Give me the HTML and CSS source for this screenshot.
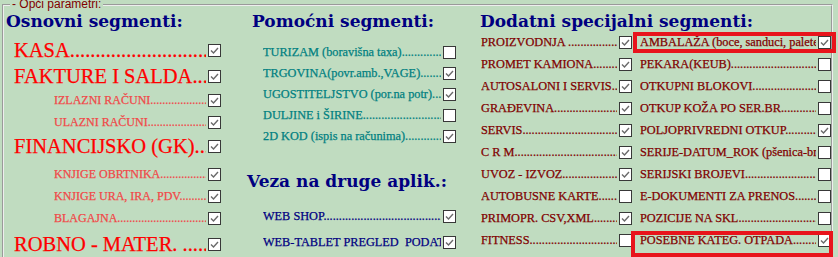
FILE: index.html
```html
<!DOCTYPE html>
<html lang="hr">
<head>
    <meta charset="UTF-8">
    <title>Opći parametri</title>
    <link rel="stylesheet" href="styles.css">
</head>
<body>
    <fieldset class="params">
        <legend>- Opći parametri:</legend>

        <div class="panels">
            <!-- Osnovni segmenti -->
            <div class="basic">
                <h2>Osnovni segmenti:</h2>
                <div class="row big first"><span class="label">KASA..............................................</span><span class="cb on"><svg viewBox="0 0 11 11"><path d="M2 5.5 L4.5 8 L9 3"/></svg></span></div>
                <div class="row big"><span class="label">FAKTURE I SALDA..................</span><span class="cb on"><svg viewBox="0 0 11 11"><path d="M2 5.5 L4.5 8 L9 3"/></svg></span></div>
                <div class="row sub"><span class="label">IZLAZNI RAČUNI....................................</span><span class="cb on"><svg viewBox="0 0 11 11"><path d="M2 5.5 L4.5 8 L9 3"/></svg></span></div>
                <div class="row sub"><span class="label">ULAZNI RAČUNI......................................</span><span class="cb on"><svg viewBox="0 0 11 11"><path d="M2 5.5 L4.5 8 L9 3"/></svg></span></div>
                <div class="row big"><span class="label">FINANCIJSKO (GK).................</span><span class="cb on"><svg viewBox="0 0 11 11"><path d="M2 5.5 L4.5 8 L9 3"/></svg></span></div>
                <div class="group">
                    <div class="row sub"><span class="label">KNJIGE OBRTNIKA....................................</span><span class="cb on"><svg viewBox="0 0 11 11"><path d="M2 5.5 L4.5 8 L9 3"/></svg></span></div>
                    <div class="row sub"><span class="label">KNJIGE URA, IRA, PDV...............................</span><span class="cb on"><svg viewBox="0 0 11 11"><path d="M2 5.5 L4.5 8 L9 3"/></svg></span></div>
                    <div class="row sub"><span class="label">BLAGAJNA..................................................</span><span class="cb on"><svg viewBox="0 0 11 11"><path d="M2 5.5 L4.5 8 L9 3"/></svg></span></div>
                </div>
                <div class="row big last"><span class="label">ROBNO - MATER. .............</span><span class="cb on"><svg viewBox="0 0 11 11"><path d="M2 5.5 L4.5 8 L9 3"/></svg></span></div>
            </div>

            <!-- Pomoćni segmenti + veze -->
            <div class="helper">
                <h2>Pomoćni segmenti:</h2>
                <div class="row first"><span class="label">TURIZAM (boravišna taxa)..................................</span><span class="cb"></span></div>
                <div class="row"><span class="label">TRGOVINA(povr.amb.,VAGE).................................</span><span class="cb on"><svg viewBox="0 0 11 11"><path d="M2 5.5 L4.5 8 L9 3"/></svg></span></div>
                <div class="row"><span class="label">UGOSTITELJSTVO (por.na potr)..........................</span><span class="cb on"><svg viewBox="0 0 11 11"><path d="M2 5.5 L4.5 8 L9 3"/></svg></span></div>
                <div class="row"><span class="label">DULJINE i ŠIRINE.................................................</span><span class="cb"></span></div>
                <div class="row"><span class="label">2D KOD (ispis na računima).............................</span><span class="cb on"><svg viewBox="0 0 11 11"><path d="M2 5.5 L4.5 8 L9 3"/></svg></span></div>

                <h2 class="links-title">Veza na druge aplik.:</h2>
                <div class="row link first-link"><span class="label">WEB SHOP...................................................................</span><span class="cb on"><svg viewBox="0 0 11 11"><path d="M2 5.5 L4.5 8 L9 3"/></svg></span></div>
                <div class="row link second-link"><span class="label">WEB-TABLET PREGLED&nbsp; PODAT</span><span class="cb on"><svg viewBox="0 0 11 11"><path d="M2 5.5 L4.5 8 L9 3"/></svg></span></div>
            </div>

            <!-- Dodatni specijalni segmenti -->
            <div class="extra">
                <h2>Dodatni specijalni segmenti:</h2>
                <div class="extra-cols">
                    <div class="col">
                        <div class="row"><span class="label">PROIZVODNJA ..........................................</span><span class="cb on"><svg viewBox="0 0 11 11"><path d="M2 5.5 L4.5 8 L9 3"/></svg></span></div>
                        <div class="row"><span class="label">PROMET KAMIONA..................................</span><span class="cb on"><svg viewBox="0 0 11 11"><path d="M2 5.5 L4.5 8 L9 3"/></svg></span></div>
                        <div class="row"><span class="label">AUTOSALONI I SERVIS.........................</span><span class="cb on"><svg viewBox="0 0 11 11"><path d="M2 5.5 L4.5 8 L9 3"/></svg></span></div>
                        <div class="row"><span class="label">GRAĐEVINA...............................................</span><span class="cb on"><svg viewBox="0 0 11 11"><path d="M2 5.5 L4.5 8 L9 3"/></svg></span></div>
                        <div class="row"><span class="label">SERVIS.........................................................</span><span class="cb on"><svg viewBox="0 0 11 11"><path d="M2 5.5 L4.5 8 L9 3"/></svg></span></div>
                        <div class="row"><span class="label">C R M..........................................................</span><span class="cb on"><svg viewBox="0 0 11 11"><path d="M2 5.5 L4.5 8 L9 3"/></svg></span></div>
                        <div class="row"><span class="label">UVOZ - IZVOZ.............................................</span><span class="cb on"><svg viewBox="0 0 11 11"><path d="M2 5.5 L4.5 8 L9 3"/></svg></span></div>
                        <div class="row"><span class="label">AUTOBUSNE KARTE..............................</span><span class="cb"></span></div>
                        <div class="row"><span class="label">PRIMOPR. CSV,XML.................................</span><span class="cb on"><svg viewBox="0 0 11 11"><path d="M2 5.5 L4.5 8 L9 3"/></svg></span></div>
                        <div class="row"><span class="label">FITNESS......................................................</span><span class="cb"></span></div>
                    </div>
                    <div class="col">
                        <div class="row hl hl-top"><span class="label">AMBALAŽA (boce, sanduci, palete)</span><span class="cb on"><svg viewBox="0 0 11 11"><path d="M2 5.5 L4.5 8 L9 3"/></svg></span></div>
                        <div class="row"><span class="label">PEKARA(KEUB)..................................................</span><span class="cb"></span></div>
                        <div class="row"><span class="label">OTKUPNI BLOKOVI..........................................</span><span class="cb"></span></div>
                        <div class="row"><span class="label">OTKUP KOŽA PO SER.BR.................................</span><span class="cb"></span></div>
                        <div class="row"><span class="label">POLJOPRIVREDNI OTKUP...............................</span><span class="cb on"><svg viewBox="0 0 11 11"><path d="M2 5.5 L4.5 8 L9 3"/></svg></span></div>
                        <div class="row"><span class="label">SERIJE-DATUM_ROK (pšenica-brašno)</span><span class="cb"></span></div>
                        <div class="row"><span class="label">SERIJSKI BROJEVI..........................................</span><span class="cb"></span></div>
                        <div class="row"><span class="label">E-DOKUMENTI ZA PRENOS..............................</span><span class="cb"></span></div>
                        <div class="row"><span class="label">POZICIJE NA SKL..............................................</span><span class="cb"></span></div>
                        <div class="row hl hl-bottom"><span class="label">POSEBNE KATEG. OTPADA..............................</span><span class="cb on"><svg viewBox="0 0 11 11"><path d="M2 5.5 L4.5 8 L9 3"/></svg></span></div>
                    </div>
                </div>
            </div>
        </div>
    </fieldset>
</body>
</html>
```

FILE: styles.css
```css
:root {
    --bg: #c0dcc0;
    --navy: #000080;
    --maroon: #800000;
    --teal: #008080;
    --mark: #e8141c;
}

* {
    box-sizing: border-box;
}

html, body {
    margin: 0;
    padding: 0;
    overflow: hidden;
}

body {
    width: 838px;
    height: 257px;
    background-color: var(--bg);
    font-family: "Liberation Serif", "Times New Roman", serif;
}

.params {
    min-width: 0;
    margin: -2px 5px 0 2px;
    padding: 0 0 8px;
    border: 2px groove #eeeeee;
}

.params legend {
    margin-left: 6px;
    padding: 0 2px 2px;
    font: 12px/12px "Liberation Sans", Arial, sans-serif;
    color: var(--maroon);
}

.panels {
    display: grid;
    grid-template-columns: 218px 248px 1fr;
}

h2 {
    margin: 0;
    font: bold 17px/19px "DejaVu Serif", serif;
    color: var(--navy);
    white-space: nowrap;
}

.row {
    display: flex;
    align-items: center;
    height: 22px;
    font-size: 12.3px;
}

.label {
    flex: 1;
    min-width: 0;
    overflow: hidden;
    white-space: nowrap;
    -webkit-text-stroke: 0.25px currentColor;
}

/* checkbox */
.cb {
    flex: none;
    width: 13px;
    height: 13px;
    margin-left: 2px;
    border: 1px solid #383838;
    background-color: #fff;
}

.cb svg {
    display: block;
    width: 11px;
    height: 11px;
}

.cb path {
    fill: none;
    stroke: #6a6a6a;
    stroke-width: 1.4;
}

/* Osnovni segmenti */
.basic {
    padding-right: 1px;
}

.basic h2 {
    padding-left: 2px;
}

.basic .big {
    height: 26px;
    padding-left: 10px;
    font-size: 20.5px;
    color: #ff0000;
}

.basic .sub {
    padding-left: 50px;
    font-size: 12px;
    color: #f04848;
}

.basic .first {
    margin-top: 6px;
}

.basic .group {
    padding-top: 4px;
}

.basic .last {
    margin-top: 2px;
}

/* Pomoćni segmenti */
.helper {
    padding-right: 14px;
}

.helper h2 {
    padding-left: 30px;
}

.helper .row {
    height: 21px;
    padding-left: 41px;
    color: var(--teal);
}

.helper .first {
    margin-top: 11px;
}

.helper .links-title {
    margin-top: 25px;
    padding-left: 25px;
}

.helper .link {
    color: var(--navy);
}

.helper .first-link {
    margin-top: 15px;
}

.helper .second-link {
    margin-top: 5px;
}

/* Dodatni specijalni segmenti */
.extra h2 {
    padding-left: 10px;
}

.extra-cols {
    display: grid;
    grid-template-columns: 151px 191px;
    gap: 8px;
    padding-left: 11px;
}

.extra .row {
    color: var(--maroon);
}

.hl {
    position: relative;
}

.hl::after {
    content: "";
    position: absolute;
    border: 4px solid var(--mark);
    pointer-events: none;
}

.hl-top::after {
    top: 1px;
    bottom: 0;
    left: -7px;
    right: -5px;
}

.hl-bottom::after {
    top: 2px;
    bottom: -6px;
    left: -9px;
    right: -2px;
}
```
